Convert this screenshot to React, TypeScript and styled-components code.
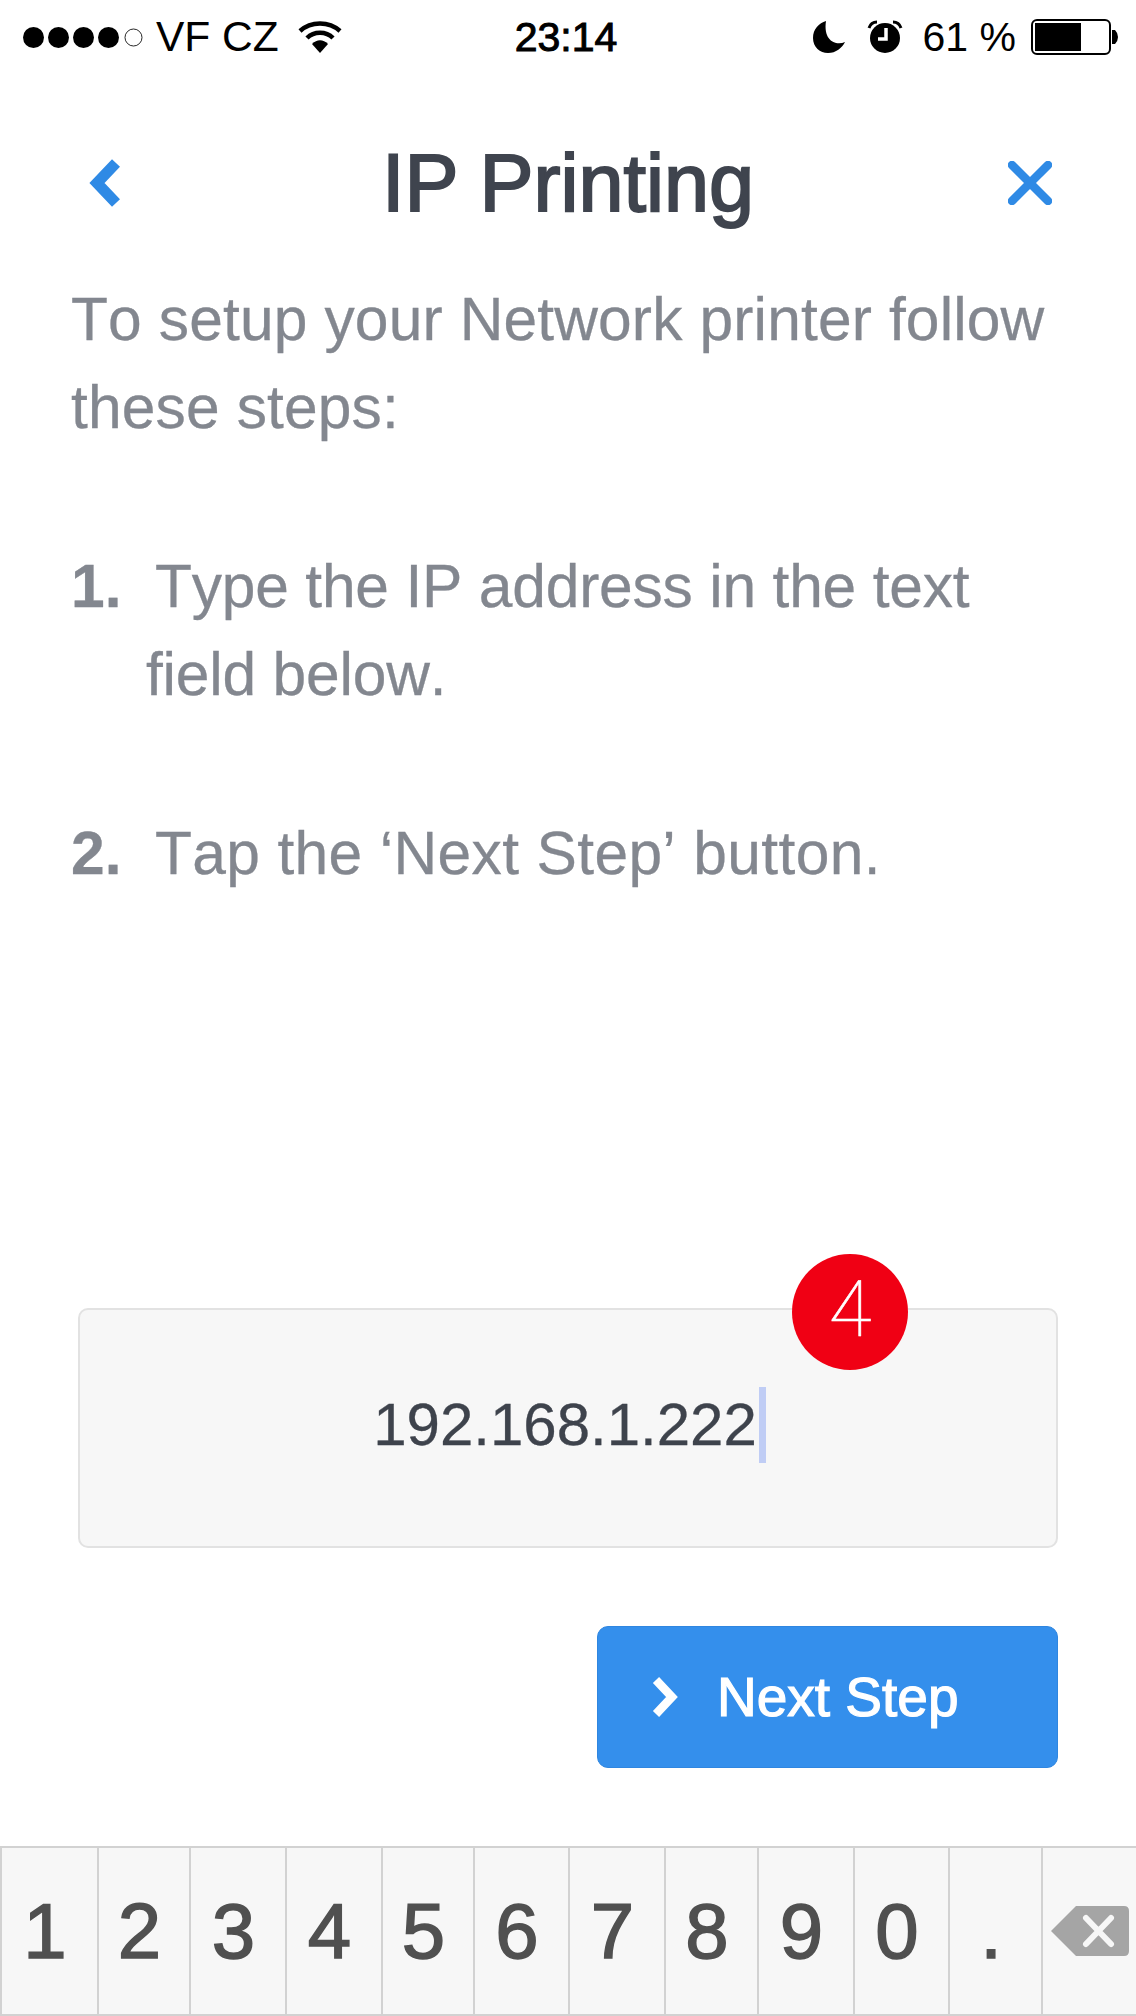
import React from "react";
import styled, { createGlobalStyle } from "styled-components";

const Global = createGlobalStyle`
  html, body { margin: 0; padding: 0; background: #fff; }
  body { font-family: "Liberation Sans", Arial, sans-serif; }
`;

const Page = styled.div`
  width: 1136px;
  height: 2016px;
  display: flex;
  flex-direction: column;
  overflow: hidden;
  background: #fff;
`;

const StatusBar = styled.div`
  height: 34px;
  margin-top: 19px;
  padding: 0 17px 0 23px;
  display: grid;
  grid-template-columns: 1fr auto 1fr;
  align-items: center;
  color: #000;
  font-size: 42.5px;
  line-height: 34px;
`;

const StatusSide = styled.div<{ $end?: boolean }>`
  display: flex;
  align-items: center;
  justify-content: ${(p) => (p.$end ? "flex-end" : "flex-start")};
`;

const Signal = styled.div`
  display: flex;
  align-items: center;
  gap: 4px;
  margin-right: 12px;
`;

const Dot = styled.span<{ $empty?: boolean }>`
  width: 21px;
  height: 21px;
  border-radius: 50%;
  box-sizing: border-box;
  background: ${(p) => (p.$empty ? "#fff" : "#000")};
  border: ${(p) => (p.$empty ? "1.5px solid #000" : "none")};
  transform: ${(p) => (p.$empty ? "scale(.85)" : "none")};
`;

const StatusText = styled.span`
  white-space: nowrap;
`;

const WifiIcon = styled.svg`
  margin-left: 19px;
`;

const AlarmIcon = styled.svg`
  margin-left: 21px;
`;

const BatteryIcon = styled.svg`
  margin-left: 15px;
`;

const Percent = styled(StatusText)`
  margin-left: 20px;
  font-size: 41px;
`;

const Clock = styled.span`
  font-size: 41px;
  -webkit-text-stroke: 1px #000;
  margin-right: 10px;
`;

const Nav = styled.header`
  margin-top: 80px;
  height: 100px;
  padding: 0 84px;
  display: grid;
  grid-template-columns: 1fr auto 1fr;
  align-items: center;
`;

const NavIcon = styled.svg<{ $end?: boolean }>`
  justify-self: ${(p) => (p.$end ? "end" : "start")};
  display: block;
`;

const Title = styled.h1`
  margin: 0;
  font-size: 81px;
  line-height: 100px;
  font-weight: 400;
  color: #3f444e;
  -webkit-text-stroke: 2px #3f444e;
`;

const Body = styled.main`
  margin-top: 42px;
  padding: 0 71px;
  color: #83878f;
  font-size: 60.5px;
  line-height: 88px;
  font-kerning: none;
  -webkit-text-stroke: 0.3px #83878f;
  display: flex;
  flex-direction: column;
  gap: 91px;
`;

const Paragraph = styled.p`
  margin: 0;
  letter-spacing: 0.14px;
`;

const Step = styled.div<{ $tracking: number }>`
  padding-left: 75px;
  text-indent: -75px;
  letter-spacing: ${(p) => p.$tracking}px;
`;

const StepNo = styled.b`
  display: inline-block;
  text-indent: 0;
  width: 84px;
  font-weight: 700;
  letter-spacing: 0;
`;

const FieldWrap = styled.section`
  position: relative;
  margin: auto 78px 0;
  height: 240px;
  box-sizing: border-box;
  background: #f7f7f7;
  border: 2px solid #e2e2e2;
  border-radius: 10px;
  display: flex;
  align-items: center;
  justify-content: center;
  padding: 0 0 7px 3px;
`;

const Value = styled.span`
  font-size: 60px;
  line-height: 76px;
  color: #3e434c;
  display: flex;
  align-items: center;
  -webkit-text-stroke: 0.3px #3e434c;
`;

const Caret = styled.span`
  width: 7px;
  height: 76px;
  margin-left: 2px;
  background: #c0cdf5;
`;

const Badge = styled.div`
  position: absolute;
  right: 148px;
  top: -56px;
  width: 116px;
  height: 116px;
  border-radius: 50%;
  background: #f00014;
  color: #fff;
  font-family: Roboto, "Liberation Sans", sans-serif;
  font-weight: 100;
  font-size: 78px;
  line-height: 112px;
  text-align: center;
  -webkit-text-stroke: 0.6px #fff;
`;

const Actions = styled.div`
  margin: 78px 78px 0;
  display: flex;
  justify-content: flex-end;
`;

const NextButton = styled.button`
  width: 461px;
  height: 142px;
  padding: 0 0 0 52px;
  border: 1px solid #2f86e0;
  border-radius: 11px;
  background: #348fec;
  color: #fff;
  font-family: "Liberation Sans", sans-serif;
  font-size: 55px;
  display: flex;
  align-items: center;
  gap: 37px;
  -webkit-text-stroke: 1.2px #fff;
`;

const Keyboard = styled.div`
  margin: 78px 0 0;
  height: 170px;
  box-sizing: border-box;
  display: grid;
  grid-template-columns: 97px 92px 96px 96px 92px 95px 96px 93px 96px 95px 93px 95px;
  background: #f7f7f7;
  border-top: 2px solid #d2d2d2;
  border-bottom: 2px solid #d2d2d2;
  border-left: 2px solid #d2d2d2;
`;

const Key = styled.div`
  display: flex;
  align-items: center;
  justify-content: center;
  padding-right: 9px;
  border-right: 2px solid #d2d2d2;
  color: #505050;
  font-size: 78px;
  -webkit-text-stroke: 1.5px #505050;
`;

const BackspaceKey = styled(Key)`
  padding-right: 2px;
  border-right: none;
`;

const keys = ["1", "2", "3", "4", "5", "6", "7", "8", "9", "0", "."];

export default function App() {
  return (
    <Page>
      <Global />
      <StatusBar>
        <StatusSide>
          <Signal>
            <Dot /><Dot /><Dot /><Dot /><Dot $empty />
          </Signal>
          <StatusText>VF CZ</StatusText>
          <WifiIcon width="44" height="34" viewBox="0 0 44 34">
            <path d="M2 11C13 1 31 1 42 11" fill="none" stroke="#000" strokeWidth="4.5" />
            <path d="M9 18C16 11 28 11 35 18" fill="none" stroke="#000" strokeWidth="4.5" />
            <path d="M14 24C19 19 25 19 30 24L22 33Z" fill="#000" />
          </WifiIcon>
        </StatusSide>
        <Clock>23:14</Clock>
        <StatusSide $end>
          <svg width="34" height="34" viewBox="0 0 34 34">
            <path d="M14 1C7 3 1 9 1 18C1 27 8 33 16 33C24 33 30 28 33 22C24 26 11 21 14 1Z" fill="#000" />
          </svg>
          <AlarmIcon width="36" height="34" viewBox="0 0 36 34">
            <circle cx="18" cy="18" r="15" fill="#000" />
            <path d="M19 8V19H11" fill="none" stroke="#fff" strokeWidth="3.5" />
            <path d="M2 8Q4 2 10 2M34 8Q32 2 26 2" fill="none" stroke="#000" strokeWidth="3" />
          </AlarmIcon>
          <Percent>61 %</Percent>
          <BatteryIcon width="88" height="36" viewBox="0 0 88 36">
            <rect x="1" y="1" width="78" height="34" rx="5" fill="#fff" stroke="#000" strokeWidth="2" />
            <rect x="4" y="4" width="46" height="28" fill="#000" />
            <path d="M81 11H84Q87 14 87 18Q87 22 84 25H81Z" fill="#000" />
          </BatteryIcon>
        </StatusSide>
      </StatusBar>

      <Nav>
        <NavIcon width="46" height="52" viewBox="0 0 46 52">
          <path d="M32 6L13 26L32 46" fill="none" stroke="#2f8ae5" strokeWidth="11" />
        </NavIcon>
        <Title>IP Printing</Title>
        <NavIcon $end width="44" height="44" viewBox="0 0 44 44">
          <path d="M4 4L40 40M40 4L4 40" fill="none" stroke="#2f8ae5" strokeWidth="8.5" strokeLinecap="round" />
        </NavIcon>
      </Nav>

      <Body>
        <Paragraph>To setup your Network printer follow these steps:</Paragraph>
        <Step $tracking={-0.2}><StepNo>1.</StepNo>Type the IP address in the text<br />field below.</Step>
        <Step $tracking={0.35}><StepNo>2.</StepNo>Tap the ‘Next Step’ button.</Step>
      </Body>

      <FieldWrap>
        <Value>192.168.1.222<Caret /></Value>
        <Badge>4</Badge>
      </FieldWrap>

      <Actions>
        <NextButton>
          <svg width="30" height="42" viewBox="0 0 30 42">
            <path d="M6 4L22 21L6 38" fill="none" stroke="#fff" strokeWidth="8.5" />
          </svg>
          Next Step
        </NextButton>
      </Actions>

      <Keyboard>
        {keys.map((k) => <Key key={k}>{k}</Key>)}
        <BackspaceKey>
          <svg width="80" height="52" viewBox="0 0 80 52">
            <path d="M26 1H74Q79 1 79 6V46Q79 51 74 51H26L1 26Z" fill="#a5a5a5" />
            <path d="M36 13L61 39M61 13L36 39" fill="none" stroke="#f7f7f7" strokeWidth="6" strokeLinecap="round" />
          </svg>
        </BackspaceKey>
      </Keyboard>
    </Page>
  );
}
